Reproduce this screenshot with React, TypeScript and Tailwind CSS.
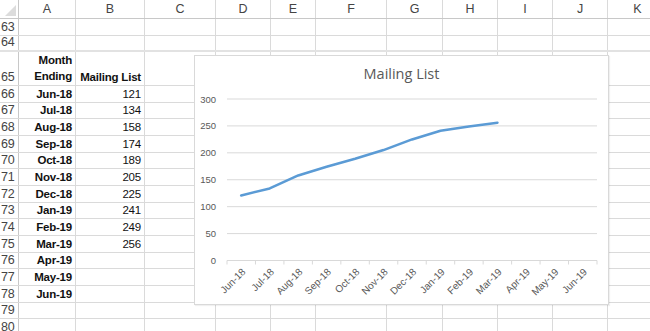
import React from "react";

const COLS: [string, number][] = [
  ["A", 57],
  ["B", 69],
  ["C", 71],
  ["D", 55],
  ["E", 45],
  ["F", 71],
  ["G", 56],
  ["H", 55],
  ["I", 55],
  ["J", 55],
  ["K", 60],
];

const MONTHS = [
  "Jun-18","Jul-18","Aug-18","Sep-18","Oct-18","Nov-18","Dec-18",
  "Jan-19","Feb-19","Mar-19","Apr-19","May-19","Jun-19",
];
const VALUES = [121, 134, 158, 174, 189, 205, 225, 241, 249, 256];

const FONT = { fontFamily: '"Liberation Sans", Arial, sans-serif' };

type RowDef = { n: number; h: string; a?: React.ReactNode; b?: React.ReactNode; thick?: boolean };

function buildRows(): RowDef[] {
  const rows: RowDef[] = [
    { n: 63, h: "h-[17px]" },
    { n: 64, h: "h-[16px]", thick: true },
    {
      n: 65,
      h: "h-[34px]",
      a: (
        <span className="font-bold leading-[16px] text-right">
          Month
          <br />
          Ending
        </span>
      ),
      b: <span className="font-bold">Mailing List</span>,
    },
  ];
  MONTHS.forEach((m, i) => {
    rows.push({
      n: 66 + i,
      h: "h-[16.67px]",
      a: <span className="font-bold">{m}</span>,
      b: VALUES[i] !== undefined ? <span>{VALUES[i]}</span> : undefined,
    });
  });
  rows.push({ n: 79, h: "h-[16.67px]" });
  rows.push({ n: 80, h: "h-[16.67px]" });
  return rows;
}

function Chart() {
  const x0 = 32;
  const x1 = 402;
  const yZero = 204.5;
  const yTop = 43;
  const step = (x1 - x0) / 13;
  const yOf = (v: number) => yZero - (v * (yZero - yTop)) / 300;
  const cx = (i: number) => x0 + (i + 0.5) * step;
  const pts = VALUES.map((v, i) => `${cx(i).toFixed(1)},${yOf(v).toFixed(1)}`).join(" ");
  const ticks = [0, 50, 100, 150, 200, 250, 300];
  return (
    <div className="absolute left-[194px] top-[55px] w-[415px] h-[250px] bg-white border border-[#d9d9d9] shadow-[1px_1px_1px_rgba(0,0,0,0.06)]">
      <div
        className="text-center text-[14.5px] text-[#595959] pt-[8px] leading-[20px]"
        style={{ fontFamily: '"Open Sans", "Liberation Sans", sans-serif' }}
      >
        Mailing List
      </div>
      <svg className="absolute left-0 top-0" width="415" height="250" style={FONT}>
        {ticks.map((t) => (
          <g key={t}>
            <line
              x1={x0}
              x2={x1}
              y1={yOf(t)}
              y2={yOf(t)}
              stroke="#d9d9d9"
              strokeWidth={1}
            />
            <text
              x={21}
              y={yOf(t) + 3.5}
              textAnchor="end"
              fontSize="9.5"
              fill="#595959"
            >
              {t}
            </text>
          </g>
        ))}
        {Array.from({ length: 14 }).map((_, i) => (
          <line
            key={i}
            x1={x0 + i * step}
            x2={x0 + i * step}
            y1={yZero}
            y2={yZero + 4}
            stroke="#d9d9d9"
            strokeWidth={1}
          />
        ))}
        {MONTHS.map((m, i) => (
          <text
            key={m}
            transform={`translate(${(cx(i) + 5).toFixed(1)},${yZero + 12}) rotate(-45)`}
            textAnchor="end"
            fontSize="10"
            fill="#595959"
          >
            {m}
          </text>
        ))}
        <polyline
          points={pts}
          fill="none"
          stroke="#5b9bd5"
          strokeWidth={2.6}
          strokeLinejoin="round"
          strokeLinecap="round"
        />
      </svg>
    </div>
  );
}

export default function App() {
  const rows = buildRows();
  return (
    <div className="relative w-[650px] h-[331px] overflow-hidden bg-white" style={FONT}>
      {/* header row */}
      <div className="flex h-[19px] border-b border-[#c8c8c8]">
        <div className="w-[19px] shrink-0 border-r border-[#c8c8c8] relative">
          <div className="absolute right-[2px] bottom-[2px] w-0 h-0 border-l-[11px] border-l-transparent border-b-[11px] border-b-[#dcdcdc]" />
        </div>
        {COLS.map(([c, w]) => (
          <div
            key={c}
            className="shrink-0 border-r border-[#dadada] flex items-center justify-center text-[12.5px] text-[#444]"
            style={{ width: w }}
          >
            {c}
          </div>
        ))}
      </div>
      {rows.map((r) => (
        <div
          key={r.n}
          className={`flex ${r.h} ${r.thick ? "border-b-2 border-[#e2e2e2]" : "border-b border-[#dadada]"}`}
        >
          <div className="w-[19px] shrink-0 border-r border-[#c8c8c8] flex items-end justify-start pl-[1px] text-[12.5px] leading-[15px] text-[#444] tracking-[-0.3px]">
            {r.n}
          </div>
          {COLS.map(([c, w]) => (
            <div
              key={c}
              className="shrink-0 border-r border-[#dadada] flex items-end justify-end px-[3px] pb-[1px] text-[11.5px] leading-[14px] tracking-[-0.2px] text-[#111]"
              style={{ width: w }}
            >
              {c === "A" ? r.a : c === "B" ? r.b : null}
            </div>
          ))}
        </div>
      ))}
      <Chart />
    </div>
  );
}
